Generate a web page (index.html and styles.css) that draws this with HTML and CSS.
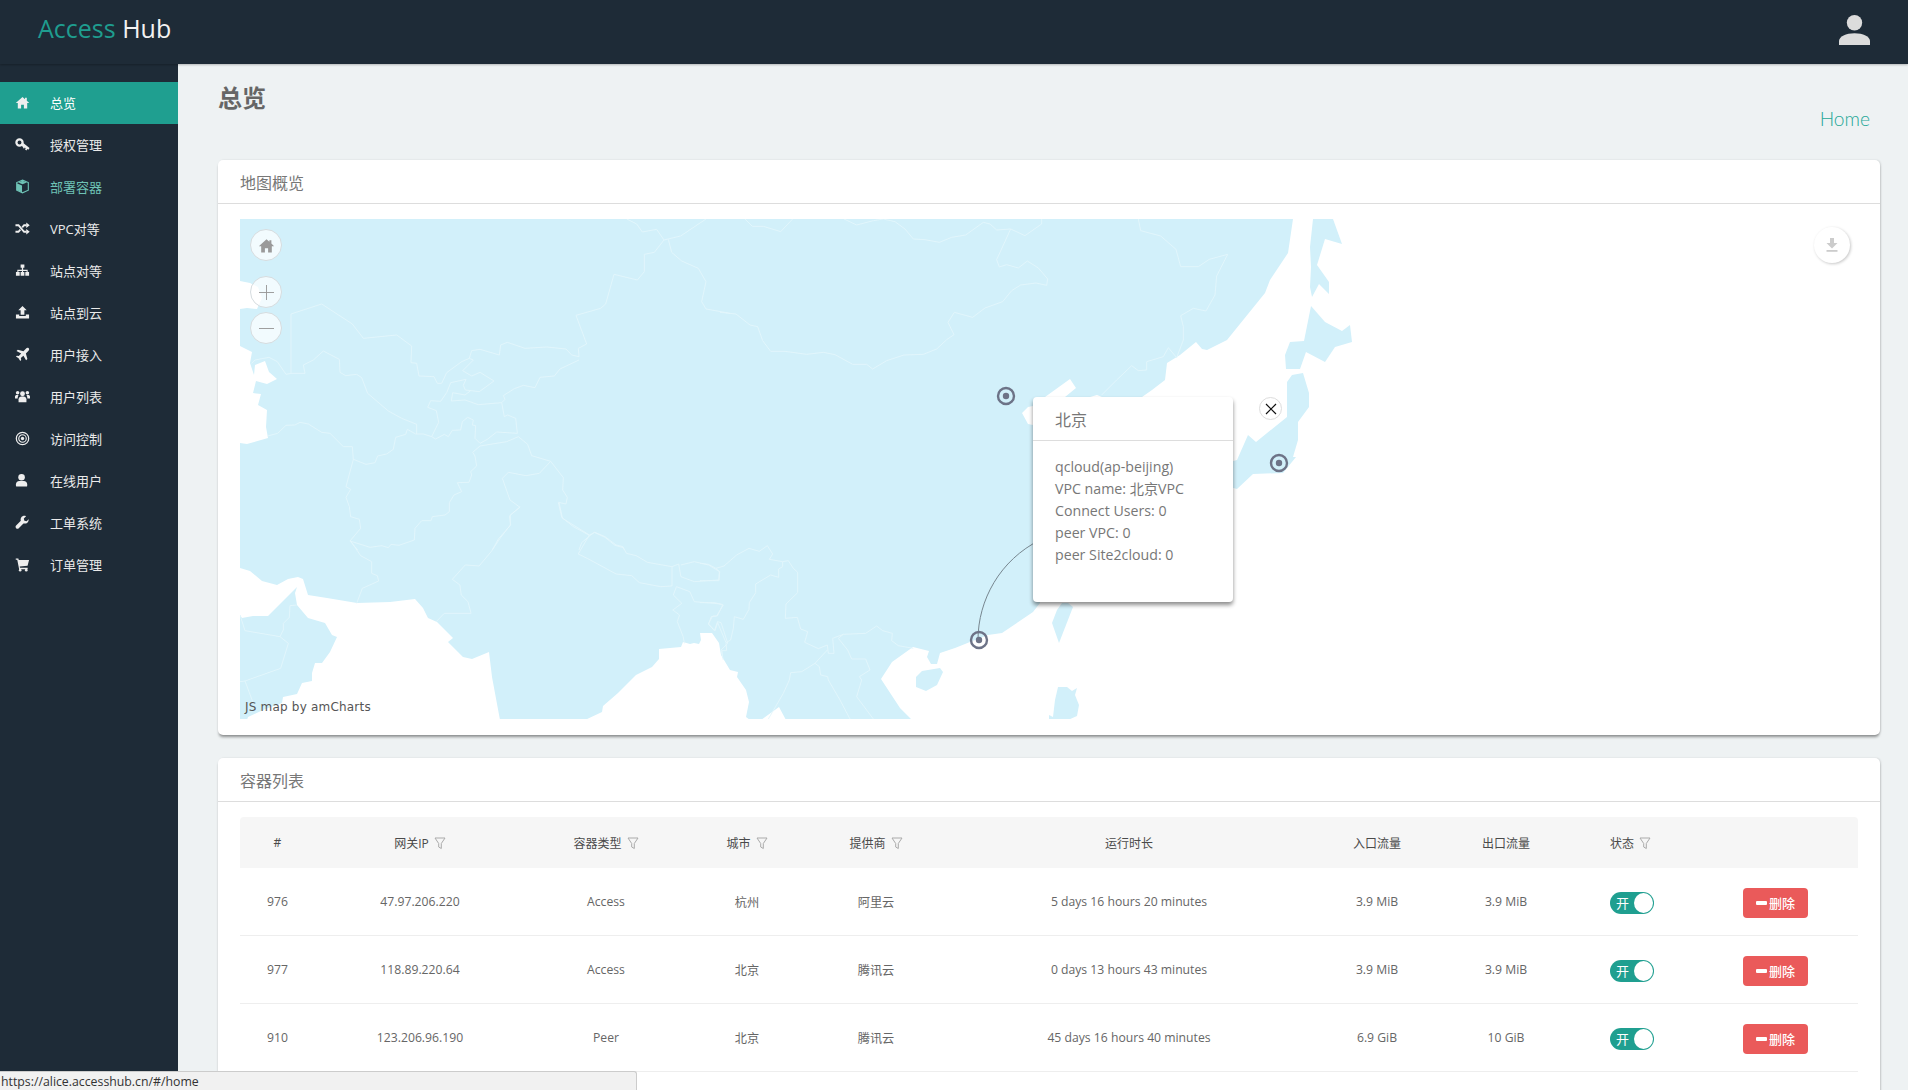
FILE: index.html
```html
<!DOCTYPE html>
<html lang="zh-CN">
<head>
<meta charset="utf-8">
<title>Access Hub</title>
<link rel="stylesheet" href="styles.css">
</head>
<body>
<svg class="defs" aria-hidden="true">
  <symbol id="i-home" viewBox="0 0 16 16"><path d="M8 2 .8 8.600H3V14.500H6.500v-4h3v4H13V8.600h2.200L12.600 6.200V3h-1.900v1.500z"/></symbol>
  <symbol id="i-key" viewBox="0 0 16 16"><circle cx="4.800" cy="5.800" r="3.300" fill="none" stroke="currentColor" stroke-width="2.400"/><path d="M7 8.800 8.800 6.500l6.700 5.300-1.200 1.900-1.100-.8-1 1.500-1.500-1 .7-1.500-.9-.7-1 1.300z"/></symbol>
  <symbol id="i-cube" viewBox="0 0 16 16"><path d="M8 1.200 14.200 3.800V12L8 14.800 1.800 12V3.800z" fill="none" stroke="currentColor" stroke-width="1.200"/><path d="M2 4.600 7.500 7v7.300L2 11.800z"/><path d="M3.500 3.600 8 1.800l4.500 1.800L8 5.500z"/></symbol>
  <symbol id="i-random" viewBox="0 0 16 16"><path d="M.5 4.500h3.200l6 7h2.600M.5 11.500h3.200l2-2.300M7.700 6.800l2-2.300h2.600" fill="none" stroke="currentColor" stroke-width="2"/><path d="M12 1.600l3.700 2.900L12 7.400zM12 8.600l3.700 2.900L12 14.400z"/></symbol>
  <symbol id="i-sitemap" viewBox="0 0 16 16"><path d="M6 1.500h4V5H8.700v2.200h4.800v2.500H15v3.800h-4V9.700h1.400V8.400H8.600v1.300H10v3.800H6V9.700h1.400V8.400H3.600v1.300H5v3.800H1V9.700h1.500V7.200h4.800V5H6z"/></symbol>
  <symbol id="i-upload" viewBox="0 0 16 16"><path d="M8 1 12.500 5.500H10V10.500H6V5.500H3.500z"/><path d="M1 10h3.500v1.800h7V10H15v4.500H1z"/></symbol>
  <symbol id="i-plane" viewBox="0 0 16 16"><path d="M14.600 1.400c-.8-.8-2-.6-3 .4L9 4.400 3 2.800 1.600 4.200l5 2.800-2.600 2.600-2-.4-1 1 2.800 1.800 1.800 2.800 1-1-.4-2L9 9.200l2.800 5 1.400-1.400-1.600-6 2.600-2.600c1-1 1.200-2.200.4-2.800z"/></symbol>
  <symbol id="i-group" viewBox="0 0 16 16"><circle cx="8" cy="5" r="2.600"/><path d="M3.800 14v-3c0-1.800 1.500-3 3-3h2.400c1.500 0 3 1.200 3 3v3z"/><circle cx="2.800" cy="4" r="1.900"/><circle cx="13.200" cy="4" r="1.900"/><path d="M0 10V8C0 7 .9 6.400 2 6.400h1.800C3.400 7 3 7.800 2.800 10zM16 10V8c0-1-.9-1.600-2-1.600h-1.800c.4.6.8 1.400 1 3.600z"/></symbol>
  <symbol id="i-bullseye" viewBox="0 0 16 16"><circle cx="8" cy="8" r="6.600" fill="none" stroke="currentColor" stroke-width="1.300"/><circle cx="8" cy="8" r="4" fill="none" stroke="currentColor" stroke-width="1.200"/><circle cx="8" cy="8" r="1.800"/></symbol>
  <symbol id="i-user" viewBox="0 0 16 16"><circle cx="7" cy="4.500" r="3.500"/><path d="M1.500 14.500A1.500 1.500 0 0 1 1 13.500V12c0-2 1.500-3.500 3.500-3.500h5c2 0 3.500 1.500 3.500 3.500v1.500c0 .5-.3 1-1 1z"/></symbol>
  <symbol id="i-wrench" viewBox="0 0 16 16"><path d="M14.800 4.200 12.400 6.600 10 6l-.6-2.400L11.800 1.200C9.800.4 7.800 1 6.800 2.400 6 3.500 5.800 5 6.200 6.200L1.200 11.200c-.8.8-.8 2 0 2.800s2 .8 2.800 0l5-5c1.400.4 3 .2 4.200-.8 1.200-1.200 1.600-2.800 1.100-4z"/></symbol>
  <symbol id="i-cart" viewBox="0 0 16 16"><path d="M.8 1.500h2.800l.4 1.600h11l-1.600 6.200-8.400.9.3 1.300h8.200v1.500H4.400L2.400 3H.8z"/><circle cx="5.500" cy="14" r="1.400"/><circle cx="12" cy="14" r="1.400"/></symbol>
  <symbol id="i-funnel" viewBox="0 0 12 13"><path d="M1 1h10L7.300 6.500v5L4.700 10V6.500z" fill="none" stroke="currentColor" stroke-width="1"/></symbol>
</svg>

<header class="topbar">
  <div class="logo"><span class="logo-a">Access</span> <span class="logo-b">Hub</span></div>
  <svg class="avatar" viewBox="0 0 31 30"><circle cx="15.500" cy="7.700" r="7.700"/><path d="M0 30v-4c0-4.500 7-7.800 15.500-7.800S31 21.500 31 26v4z"/></svg>
</header>

<div class="shell">
  <nav class="sidebar">
    <a class="nav-item active"><svg class="ico"><use href="#i-home"/></svg><span>总览</span></a>
    <a class="nav-item"><svg class="ico"><use href="#i-key"/></svg><span>授权管理</span></a>
    <a class="nav-item current"><svg class="ico"><use href="#i-cube"/></svg><span>部署容器</span></a>
    <a class="nav-item"><svg class="ico"><use href="#i-random"/></svg><span>VPC对等</span></a>
    <a class="nav-item"><svg class="ico"><use href="#i-sitemap"/></svg><span>站点对等</span></a>
    <a class="nav-item"><svg class="ico"><use href="#i-upload"/></svg><span>站点到云</span></a>
    <a class="nav-item"><svg class="ico"><use href="#i-plane"/></svg><span>用户接入</span></a>
    <a class="nav-item"><svg class="ico"><use href="#i-group"/></svg><span>用户列表</span></a>
    <a class="nav-item"><svg class="ico"><use href="#i-bullseye"/></svg><span>访问控制</span></a>
    <a class="nav-item"><svg class="ico"><use href="#i-user"/></svg><span>在线用户</span></a>
    <a class="nav-item"><svg class="ico"><use href="#i-wrench"/></svg><span>工单系统</span></a>
    <a class="nav-item"><svg class="ico"><use href="#i-cart"/></svg><span>订单管理</span></a>
  </nav>

  <main class="content">
    <div class="page-head">
      <h1 class="page-title">总览</h1>
      <a class="crumb">Home</a>
    </div>

    <section class="card">
      <h2 class="card-title">地图概览</h2>
      <div class="card-body">
        <div class="map">
          <svg class="map-svg" viewBox="240 219 1618 500" preserveAspectRatio="none">
            <rect class="land" x="240" y="219" width="1620" height="501"/>
            <g class="water">
              <polygon points="240,281 250,283 258,287 262,298 257,309 247,308 240,309"/>
              <polygon points="240,346 252,352 250,363 254,375 255,365 265,361 269,372 277,379 267,384 256,381 253,393 261,394 258,405 267,410 266,427 268,438 247,444 240,443"/>
              <polygon points="240,568 250,571 262,581 277,585 288,579 298,577 303,579 308,595 327,598 357,603 390,602 415,599 423,608 428,618 437,622 453,638 448,642 463,657 472,659 489,652 492,677 500,720 247,720 248,717 263,710 282,703 283,697 297,694 302,683 312,681 312,673 315,663 322,663 330,652 337,637 332,635 325,623 308,618 297,605 295,593 297,587 268,616 253,616 242,618 240,615"/>
              <polygon points="585,720 602,712 603,706 618,693 636,675 652,667 659,659 659,649 681,647 683,642 690,644 694,643 699,644 701,640 700,633 712,633 719,643 721,655 730,670 738,672 737,677 746,690 749,702 746,717 750,720 761,720 779,707 786,720"/>
              <polygon points="912,720 900,708 881,679 892,662 913,647 929,651 927,657 931,664 937,664 940,653 955,648 970,642 988,635 1002,633 1033,612 1040,603 1040,520 1033,425 1028,424 1022,413 1028,407 1033,406 1045,397 1070,379 1076,388 1065,397 1090,397 1097,395 1102,397 1142,397 1152,390 1165,380 1167,363 1180,355 1196,342 1202,349 1207,350 1227,340 1265,293 1270,280 1288,253 1293,219 1860,219 1860,720"/>
            </g>
            <g class="land-isles">
              <polygon points="916,677 922,671 940,668 943,672 937,685 926,691 916,687"/>
              <polygon points="1068,603 1073,607 1059,643 1052,623 1057,610 1062,603"/>
              <polygon points="1058,687 1067,687 1072,691 1077,688 1075,695 1079,705 1077,716 1068,720 1049,720 1049,715 1053,717 1055,700"/>
              <polygon points="1287,382 1292,375 1303,373 1309,393 1309,407 1298,422 1298,440 1293,457 1296,457 1283,473 1253,474 1237,489 1230,487 1230,462 1237,460 1248,435 1256,442 1287,417 1287,400"/>
              <polygon points="1311,306 1325,322 1342,331 1350,325 1352,342 1335,347 1325,362 1306,352 1300,369 1286,369 1285,355 1290,342 1304,341"/>
              <polygon points="1313,219 1333,219 1342,244 1325,239 1317,265 1329,282 1329,294 1319,284 1312,297 1310,287 1311,267 1310,247"/>
            </g>
            <g class="borders" transform="translate(230 200) scale(.33333)">
              <polyline points="183,520 183,342 275,312 367,372 400,415 500,405 545,438 543,488 560,490 567,528 612,530 622,550 635,550 650,518 695,485 718,475 725,452 750,448 808,465 812,435 832,427 885,445 950,441 1008,447 1025,465 1047,470 1045,445 1070,432 1038,346 1112,325 1127,312 1152,223 1222,240 1243,215 1243,163 1273,157 1302,120 1280,88 1237,96 1220,72 1190,57"/>
              <polyline points="1302,120 1352,108 1428,57"/>
              <polyline points="1315,118 1325,157 1355,183 1405,205 1428,245 1415,305 1428,327 1500,340"/>
              <polyline points="65,490 75,480 117,472 142,485 168,523 183,520 225,520 220,495 250,480 280,453 328,478 330,517 347,527 380,523 395,533 413,580 475,633 515,655 560,673 560,702"/>
              <polyline points="113,708 143,700 168,676 195,675 210,667 235,672 275,697 300,700 340,740 367,740 370,778 408,793 435,788 443,768 470,762 490,748 497,712 527,703 532,688 557,702 580,702 605,710 617,717 643,703 655,710 667,691 692,690 697,665 713,652 730,660 727,675 737,677 735,715 750,730 772,718 800,696 862,700 857,655 833,645 823,650 815,608 825,598 820,587 853,566 880,556 915,563 930,532 973,528 990,507 1047,480"/>
              <polyline points="605,710 626,667 619,632 593,622 602,602 632,604 650,578 662,548 708,538 700,556 706,570 748,575 792,543 750,517 725,528 698,512 730,480 718,475"/>
              <polyline points="722,572 705,585 668,578 664,603 705,600 745,614 815,608"/>
              <polyline points="370,778 348,860 362,868 348,892 358,920 362,950 388,958 392,985 360,1023 383,1050"/>
              <polyline points="360,1023 420,1042 455,1037 475,1043 483,1033 507,1036 553,1020 555,985 575,962 603,962 607,950 645,945 658,935 658,908 672,885 695,875 682,848 717,847 725,825 722,815 740,798 735,768 728,757 750,738 830,725 865,710 893,733 905,767 962,784 1000,833 998,870 1012,892 1008,912 985,907 995,952 1030,980 1080,1007 1093,997 1125,1012 1155,1036 1180,1043 1183,1050"/>
              <polyline points="962,784 928,820 888,827 835,817 817,835 840,900 870,922 838,948 842,975 805,1017 787,1050"/>
              <polyline points="1080,1007 1055,1028 1047,1050"/>
            </g>
            <g class="borders" transform="translate(720 219) scale(.33333)">
              <polyline points="0,280 48,285 90,318 113,323 128,365 152,397 195,397 260,406 310,400 345,407 398,436 440,436 458,450 500,425 552,408 610,406 650,390 680,362 702,347 684,310 703,280 758,295 795,267 848,248 875,215 902,198 948,192 980,199 983,180 955,147 922,126 895,147 860,137 838,144 830,122 872,30 915,50 965,15 965,0"/>
              <polyline points="75,0 97,22 130,22 182,38 218,0"/>
              <polyline points="372,0 410,18 460,5 490,0 525,8 555,30 580,60 615,62 658,70 695,55 737,48 790,10 810,15 830,33 872,30"/>
            </g>
            <g class="borders" transform="translate(950 200) scale(.33333)">
              <polyline points="565,57 572,92 632,108 678,148 692,200 745,200 778,178 833,163 800,228 795,285 768,333 730,325 692,347 700,380 700,420 680,473 655,443 640,470 590,485 590,510 565,512 545,497 500,540 455,585"/>
            </g>
            <g class="borders" transform="translate(700 480) scale(.33333)">
              <polyline points="0,250 25,253 48,265 72,258 110,225 147,205 178,214 202,197 218,222 208,238 248,245 265,242 280,265 293,277 293,338 258,372 256,415 292,412 302,447 323,455 314,487 355,506 382,495 385,520 402,520 398,475 430,463 497,460 530,438 548,452 577,460 575,482 595,497 640,505"/>
              <polyline points="248,245 248,260 236,267 236,292 212,285 167,312 167,338 148,368 147,388 130,418 103,410 100,445 92,480 78,488 53,428 45,452 25,432 38,408 52,408 68,375 45,368 0,368"/>
              <polyline points="0,302 57,302 58,275 48,265"/>
              <polyline points="430,463 415,475 443,510 455,537 497,537 510,570 478,590 485,600"/>
              <polyline points="382,510 345,550 305,575 272,578 268,600"/>
              <polyline points="345,550 358,560 362,585 383,590 385,600"/>
              <polyline points="78,488 80,512 66,512 67,530"/>
            </g>
            <g class="borders" transform="translate(700 680) scale(.33333)">
              <polyline points="268,0 250,40 205,117"/>
              <polyline points="385,0 420,60 450,117"/>
              <polyline points="485,0 470,50 520,117"/>
            </g>
            <g class="borders" transform="translate(230 500) scale(.44643 .33333)">
              <polyline points="745,55 805,105 780,162 800,175 865,222 900,227 917,248 965,260 990,258 990,200 935,187 910,167 888,160 880,140 865,135 840,110 817,97 805,105"/>
              <polyline points="990,200 1005,192 1010,230 1040,245 1095,240 1097,215 1072,195 1040,185 1010,195"/>
              <polyline points="1000,260 993,285 1012,310 992,330 1007,345 1002,365 1015,410 1018,430"/>
              <polyline points="1000,260 1030,275 1040,305 1100,312 1105,315 1090,348 1078,350 1072,372 1085,392 1092,365 1100,368 1115,430 1100,450 1105,480"/>
              <polyline points="650,20 628,45 628,75 605,115 585,155 558,198 527,195 498,238 515,255 518,285 533,305 540,340 480,340 462,365"/>
              <polyline points="745,55 737,8"/>
            </g>
            <g class="borders" transform="translate(240 540) scale(.33333)">
              <polyline points="330,0 362,47 395,65 395,100 412,107 416,123 367,145 350,190"/>
              <polyline points="0,225 15,272 120,290 130,270 130,250 148,232 150,197 170,195"/>
              <polyline points="120,290 145,310 122,385 15,423 0,425"/>
              <polyline points="15,423 40,490"/>
            </g>
            <path class="arc" d="M978 640C978 600 1000 560 1040 540"/>
            <g class="pin"><circle cx="1006" cy="396" r="8"/><circle class="pin-dot" cx="1006" cy="396" r="3.2"/></g>
            <g class="pin"><circle cx="1279" cy="463" r="8"/><circle class="pin-dot" cx="1279" cy="463" r="3.2"/></g>
            <g class="pin"><circle cx="979" cy="640" r="8"/><circle class="pin-dot" cx="979" cy="640" r="3.2"/></g>
          </svg>

          <button class="map-btn btn-home"><svg class="map-ico"><use href="#i-home"/></svg></button>
          <button class="map-btn btn-plus"><svg viewBox="0 0 16 16" class="map-line"><path d="M0 8h16M8 0v16"/></svg></button>
          <button class="map-btn btn-minus"><svg viewBox="0 0 16 16" class="map-line"><path d="M0 8h16"/></svg></button>
          <button class="map-export"><svg viewBox="0 0 12 14" class="export-ico"><path d="M4 0h4v5h3.500L6 10.500.5 5H4z"/><path d="M.5 12h11v1.800H.5z"/></svg></button>
          <button class="popup-close"><svg viewBox="0 0 12 12" class="close-ico"><path d="M1 1l10 10M11 1 1 11"/></svg></button>
          <div class="credit">JS map by amCharts</div>

          <div class="popup">
            <div class="popup-head">北京</div>
            <div class="popup-body">
              <div>qcloud(ap-beijing)</div>
              <div>VPC name: 北京VPC</div>
              <div>Connect Users: 0</div>
              <div>peer VPC: 0</div>
              <div>peer Site2cloud: 0</div>
            </div>
          </div>
        </div>
      </div>
    </section>

    <section class="card card-list">
      <h2 class="card-title">容器列表</h2>
      <div class="card-body">
        <table class="grid">
          <thead>
            <tr>
              <th class="c1">#</th>
              <th class="c2">网关IP<svg class="funnel"><use href="#i-funnel"/></svg></th>
              <th class="c3">容器类型<svg class="funnel"><use href="#i-funnel"/></svg></th>
              <th class="c4">城市<svg class="funnel"><use href="#i-funnel"/></svg></th>
              <th class="c5">提供商<svg class="funnel"><use href="#i-funnel"/></svg></th>
              <th class="c6">运行时长</th>
              <th class="c7">入口流量</th>
              <th class="c8">出口流量</th>
              <th class="c9">状态<svg class="funnel"><use href="#i-funnel"/></svg></th>
              <th class="c10"></th>
            </tr>
          </thead>
          <tbody>
            <tr>
              <td>976</td><td>47.97.206.220</td><td>Access</td><td>杭州</td><td>阿里云</td><td>5 days 16 hours 20 minutes</td><td>3.9 MiB</td><td>3.9 MiB</td>
              <td class="c9"><span class="switch"><span class="switch-label">开</span><span class="knob"></span></span></td>
              <td class="c10"><span class="del"><span class="del-bar"></span>删除</span></td>
            </tr>
            <tr>
              <td>977</td><td>118.89.220.64</td><td>Access</td><td>北京</td><td>腾讯云</td><td>0 days 13 hours 43 minutes</td><td>3.9 MiB</td><td>3.9 MiB</td>
              <td class="c9"><span class="switch"><span class="switch-label">开</span><span class="knob"></span></span></td>
              <td class="c10"><span class="del"><span class="del-bar"></span>删除</span></td>
            </tr>
            <tr>
              <td>910</td><td>123.206.96.190</td><td>Peer</td><td>北京</td><td>腾讯云</td><td>45 days 16 hours 40 minutes</td><td>6.9 GiB</td><td>10 GiB</td>
              <td class="c9"><span class="switch"><span class="switch-label">开</span><span class="knob"></span></span></td>
              <td class="c10"><span class="del"><span class="del-bar"></span>删除</span></td>
            </tr>
          </tbody>
        </table>
      </div>
    </section>
  </main>
</div>

<div class="statusbar">https://alice.accesshub.cn/#/home</div>
</body>
</html>
```

FILE: styles.css
```css
* { box-sizing: border-box; }
html, body { margin: 0; height: 100%; overflow: hidden; }
body {
  display: flex;
  flex-direction: column;
  font-family: "Open Sans", "Noto Sans CJK SC", sans-serif;
  color: #666;
  background: #eef2f3;
}
.defs { position: absolute; width: 0; height: 0; }

.topbar {
  height: 64px;
  flex: none;
  background: #1e2b37;
  display: flex;
  align-items: center;
  justify-content: space-between;
  padding: 0 38px 8px 38px;
  box-shadow: 0 1px 2px rgba(0,0,0,.25);
  position: relative;
  z-index: 2;
}
.logo { font-size: 25px; line-height: 32px; }
.logo-a { color: #1f9d8f; }
.logo-b { color: #f2f2f2; }
.avatar { width: 31px; height: 30px; fill: #dcdcdc; margin-top: 4px; }

.shell { flex: 1; display: flex; min-height: 0; }
.sidebar {
  width: 178px;
  flex: none;
  background: #1e2b37;
  padding-top: 18px;
}
.nav-item {
  height: 42px;
  display: flex;
  align-items: center;
  padding: 0 0 2px 15px;
  color: #eaeaea;
  font-size: 13px;
}
.nav-item .ico { width: 15px; height: 15px; fill: currentColor; color: #eee; margin-right: 20px; }
.nav-item.active { background: #1f9f90; color: #fff; }
.nav-item.current { color: #6ec2b5; }
.nav-item.current .ico { color: #6ec2b5; }

.content { flex: 1; min-width: 0; padding: 0 28px 0 40px; overflow: hidden; }
.page-head { height: 96px; display: flex; justify-content: space-between; align-items: flex-start; }
.page-title { margin: 17px 0 0; font-size: 24px; line-height: 34px; font-weight: 700; color: #666; }
.crumb { margin: 42px 10px 0 0; font-family: Lato, sans-serif; font-weight: 300; font-size: 19.2px; line-height: 26px; color: #26a898; }

.card {
  background: #fff;
  border-radius: 5px;
  box-shadow: 0 3px 3px -1px rgba(0,0,0,.4), 1px 0 2px rgba(0,0,0,.12);
  margin-bottom: 23px;
}
.card-list { padding-bottom: 60px; }
.card-title {
  margin: 0;
  height: 44px;
  padding: 0 22px;
  border-bottom: 1px solid #ddd;
  font-size: 16px;
  font-weight: 400;
  line-height: 46px;
  color: #777;
}
.card-body { padding: 15px 22px 16px 22px; }

.map { position: relative; height: 500px; }
.map-svg { display: block; width: 100%; height: 500px; }
.land, .land-isles polygon { fill: #d2f0fa; }
.water polygon { fill: #fff; }
.borders polyline { fill: none; stroke: #e3f6fc; stroke-width: .9; vector-effect: non-scaling-stroke; }
.arc { fill: none; stroke: #77868f; stroke-width: 1; }
.pin circle { fill: none; stroke: #6d7387; stroke-width: 2.4; }
.pin .pin-dot { fill: #6d7387; stroke: none; }

.map-btn {
  position: absolute;
  left: 10px;
  width: 32px;
  height: 32px;
  padding: 0;
  display: flex;
  align-items: center;
  justify-content: center;
  border-radius: 50%;
  border: 1px solid #d6dcdf;
  background: rgba(255,255,255,.7);
}
.btn-home { top: 10px; }
.btn-plus { top: 57px; }
.btn-minus { top: 93px; }
.map-ico { width: 17px; height: 17px; fill: #9a9a9a; }
.map-line { width: 15px; height: 15px; fill: none; stroke: #999; stroke-width: 1; }
.map-export {
  position: absolute;
  top: 8px;
  right: 8px;
  width: 36px;
  height: 36px;
  padding: 0;
  display: flex;
  align-items: center;
  justify-content: center;
  border: 0;
  border-radius: 50%;
  background: #fff;
  box-shadow: 1px 1px 3px rgba(0,0,0,.22);
}
.export-ico { width: 12px; height: 14px; fill: #ccc; }
.popup-close {
  position: absolute;
  left: 1019px;
  top: 178px;
  width: 23px;
  height: 23px;
  padding: 0;
  display: flex;
  align-items: center;
  justify-content: center;
  border-radius: 50%;
  border: 1px solid #ddd;
  background: #fff;
}
.close-ico { width: 12px; height: 12px; fill: none; stroke: #111; stroke-width: 1.2; }
.credit {
  position: absolute;
  left: 5px;
  bottom: 4px;
  font-family: "DejaVu Sans", sans-serif;
  font-size: 12px;
  letter-spacing: .2px;
  line-height: 15px;
  color: #555;
}
.popup {
  position: absolute;
  left: 793px;
  top: 178px;
  width: 200px;
  height: 205px;
  background: #fff;
  border-radius: 4px;
  box-shadow: 0 3px 4px rgba(0,0,0,.45);
  font-size: 14.2px;
  color: #777;
}
.popup-head { height: 44px; padding: 0 22px; line-height: 47px; font-size: 16px; border-bottom: 1px solid #ddd; }
.popup-body { padding: 15px 22px 0; line-height: 22px; }

.grid { width: 100%; table-layout: fixed; border-collapse: separate; border-spacing: 0; font-size: 12.2px; }
.grid th {
  height: 51px;
  padding: 0;
  background: #f6f6f6;
  font-size: 12px;
  font-weight: 400;
  color: #4a4a4a;
  text-align: center;
}
.grid td { height: 68px; padding: 0; text-align: center; border-bottom: 1px solid #eee; color: #666; }
.grid th.c1 { width: 75px; border-top-left-radius: 4px; }
.grid th.c2 { width: 210px; }
.grid th.c3 { width: 162px; }
.grid th.c4 { width: 120px; }
.grid th.c5 { width: 138px; }
.grid th.c6 { width: 368px; }
.grid th.c7 { width: 128px; }
.grid th.c8 { width: 130px; }
.grid th.c9 { width: 156px; }
.grid th.c10 { border-top-right-radius: 4px; }
.grid .c9 { text-align: left; padding-left: 39px; }
.grid .c10 { text-align: left; padding-left: 16px; }
.funnel { width: 12px; height: 13px; margin-left: 5px; vertical-align: -2px; color: #aaa; }

.switch {
  display: inline-flex;
  align-items: center;
  justify-content: space-between;
  width: 44px;
  height: 22px;
  margin-top: 2px;
  padding: 0 1px 0 6px;
  border-radius: 11px;
  background: #1f9f90;
  color: #fff;
  font-size: 13px;
  vertical-align: middle;
}
.knob { width: 19px; height: 20px; border-radius: 50%; background: #fff; }
.del {
  display: inline-flex;
  align-items: center;
  justify-content: center;
  gap: 2px;
  width: 65px;
  height: 30px;
  margin-top: 2px;
  border-radius: 4px;
  background: #ea5a5a;
  color: #fff;
  font-size: 13px;
  font-weight: 500;
  vertical-align: middle;
}
.del-bar { width: 11px; height: 4px; border-radius: 1px; background: #fff; }

.statusbar {
  position: fixed;
  left: 0;
  bottom: 0;
  width: 637px;
  height: 19px;
  padding-left: 1px;
  background: #f1f1f1;
  border-top: 1px solid #ccc;
  border-right: 1px solid #ccc;
  border-top-right-radius: 3px;
  font-size: 12.3px;
  line-height: 20px;
  color: #333;
}
```
